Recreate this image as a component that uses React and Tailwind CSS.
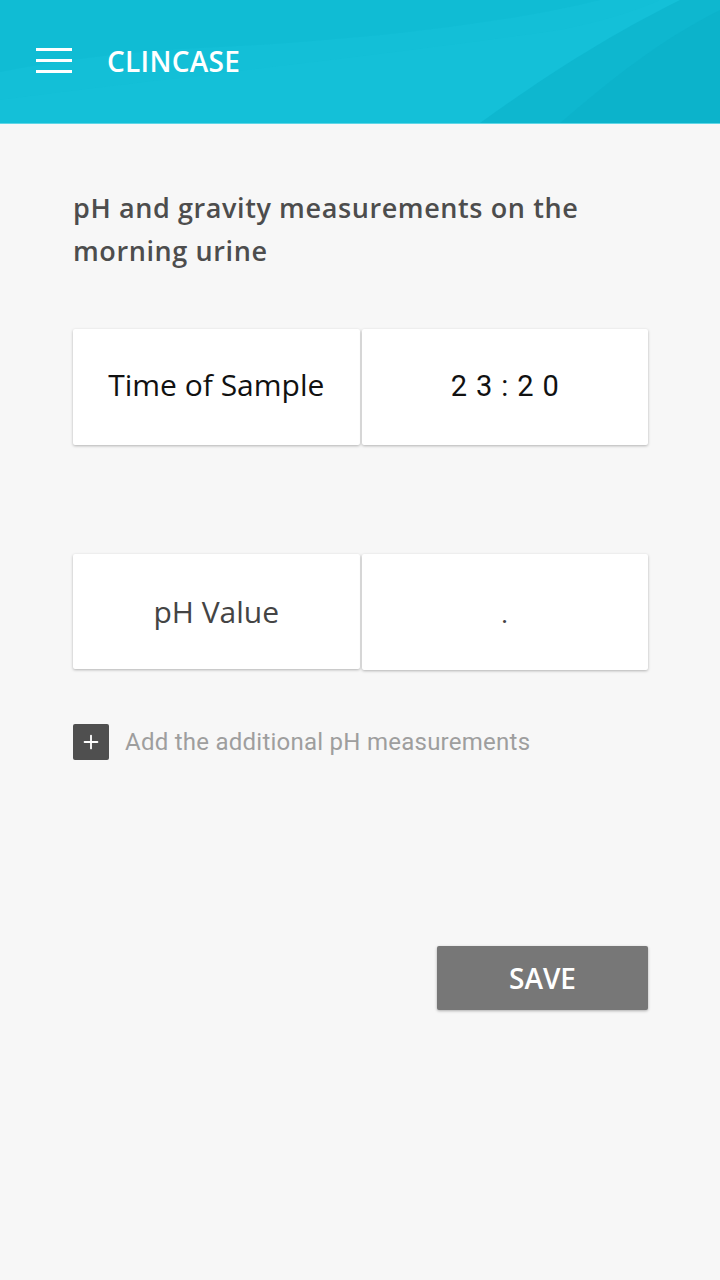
import { Plus } from 'lucide-react'

const UBUNTU = { fontFamily: '"Open Sans", "Noto Sans", sans-serif' }
const ROBOTO = { fontFamily: 'Roboto, "Noto Sans", sans-serif' }

function HeaderWaves() {
  return (
    <svg className="absolute inset-0 w-full h-full" viewBox="0 0 720 123" preserveAspectRatio="none">
      <path d="M0 0 H600 C520 20 380 40 200 48 C120 52 50 62 0 72 Z" fill="#0fb9d2" opacity="0.55" />
      <path d="M0 100 C150 80 350 60 560 30 C600 22 640 10 660 0 H720 V123 H0 Z" fill="#16c3da" opacity="0.35" />
      <path d="M480 123 C540 80 600 40 680 0 H720 V123 Z" fill="#0ab0c9" opacity="0.6" />
      <path d="M560 123 C610 80 660 40 720 10 V123 Z" fill="#09acc5" opacity="0.4" />
    </svg>
  )
}

function Cell({ children, className = '' }) {
  return (
    <div className={`flex-1 bg-white rounded-[2px] shadow-[0_1px_3px_rgba(0,0,0,0.28)] flex items-center justify-center ${className}`}>
      {children}
    </div>
  )
}

export default function App() {
  return (
    <div className="w-[720px] h-[1280px] bg-[#f7f7f7] flex flex-col">
      {/* Toolbar */}
      <header className="relative h-[124px] bg-[#13bfd7] border-b border-[#5fd6e6] overflow-hidden shrink-0">
        <HeaderWaves />
        <div className="relative flex items-center h-full pl-[36px] pb-[2px]">
          <div className="flex flex-col gap-[8px] w-[36px]">
            <span className="block h-[3px] bg-white" />
            <span className="block h-[3px] bg-white" />
            <span className="block h-[3px] bg-white" />
          </div>
          <span className="ml-[35px] text-white text-[28px] font-semibold tracking-[0.3px]" style={UBUNTU}>
            CLINCASE
          </span>
        </div>
      </header>

      <main className="flex flex-col pl-[73px] pr-[72px]">
        <h1 className="pt-[62px] text-[27px] leading-[43px] font-semibold tracking-[0.6px] text-[#4d4d4d]" style={UBUNTU}>
          pH and gravity measurements on the morning urine
        </h1>

        <div className="mt-[57px] flex gap-[2px] h-[116px]">
          <Cell>
            <span className="text-[30px] text-[#111] -mt-[5px]" style={UBUNTU}>Time of Sample</span>
          </Cell>
          <Cell>
            <span className="text-[29px] text-[#111] tracking-[9px] pl-[9px]" style={ROBOTO}>23:20</span>
          </Cell>
        </div>

        <div className="mt-[109px] flex gap-[2px] h-[116px]">
          <Cell className="h-[115px]">
            <span className="text-[30px] text-[#444]" style={UBUNTU}>pH Value</span>
          </Cell>
          <Cell>
            <span className="text-[28px] text-[#444] mt-[4px]" style={ROBOTO}>.</span>
          </Cell>
        </div>

        <div className="mt-[54px] flex items-center gap-[16px]">
          <div className="w-[36px] h-[36px] bg-[#4f4f4f] rounded-[2px] flex items-center justify-center">
            <Plus className="w-[22px] h-[22px] text-white" strokeWidth={2} />
          </div>
          <span className="text-[24px] tracking-[0.25px] text-[#9e9e9e]" style={ROBOTO}>Add the additional pH measurements</span>
        </div>

        <div className="mt-[186px] flex justify-end">
          <button className="w-[211px] h-[64px] bg-[#777] rounded-[2px] shadow-[0_1px_3px_rgba(0,0,0,0.3)] text-white text-[28px] font-semibold" style={UBUNTU}>
            SAVE
          </button>
        </div>
      </main>
    </div>
  )
}
